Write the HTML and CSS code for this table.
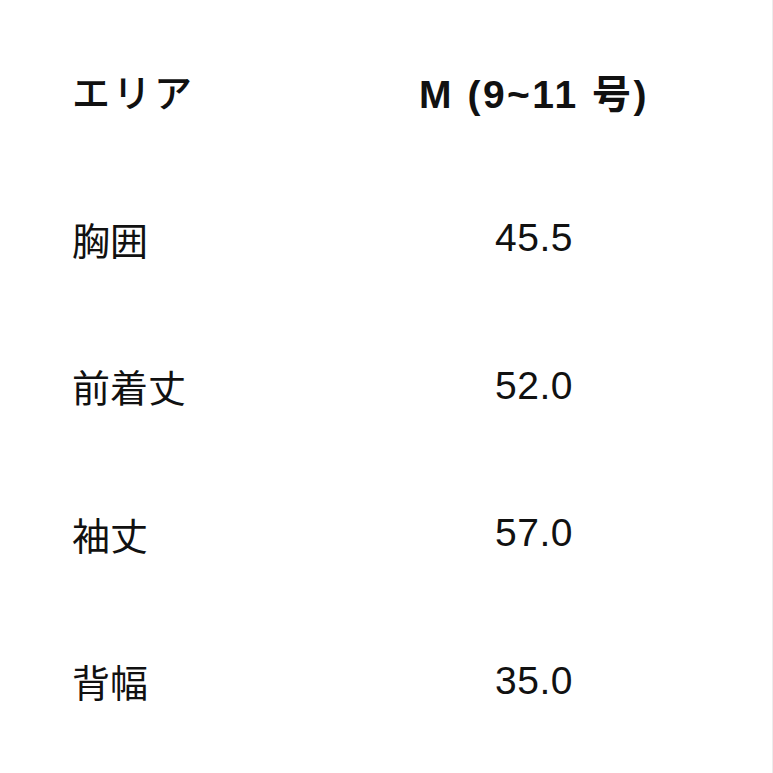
FILE: index.html
```html
<!DOCTYPE html>
<html lang="ja">
<head>
<meta charset="utf-8">
<link rel="stylesheet" href="styles.css">
</head>
<body>
<div class="page">
  <div class="size-table">
    <div class="cell label head">エリア</div>
    <div class="cell value head">M (9~11 号)</div>
    <div class="cell label">胸囲</div>
    <div class="cell value">45.5</div>
    <div class="cell label">前着丈</div>
    <div class="cell value">52.0</div>
    <div class="cell label">袖丈</div>
    <div class="cell value">57.0</div>
    <div class="cell label">背幅</div>
    <div class="cell value">35.0</div>
  </div>
</div>
</body>
</html>
```
FILE: styles.css
```css
html, body {
  margin: 0;
  padding: 0;
  background: #ffffff;
}
.page {
  width: 772px;
  height: 773px;
  border-right: 1px solid #ececec;
  box-sizing: content-box;
}
.size-table {
  display: grid;
  grid-template-columns: 250px 424px;
  grid-auto-rows: 147.5px;
  padding: 17px 0 0 72px;
  font-family: "Liberation Sans", "Noto Sans CJK JP", sans-serif;
  font-size: 39px;
  color: #111;
}
.cell {
  display: flex;
  align-items: center;
}
.label {
  font-family: "Noto Sans CJK JP", sans-serif;
  font-size: 38px;
}
.value {
  justify-content: center;
  letter-spacing: 0.5px;
}
.value.head {
  font-weight: bold;
  letter-spacing: 2.5px;
}
.label.head {
  font-weight: 500;
  letter-spacing: 3px;
}
```
